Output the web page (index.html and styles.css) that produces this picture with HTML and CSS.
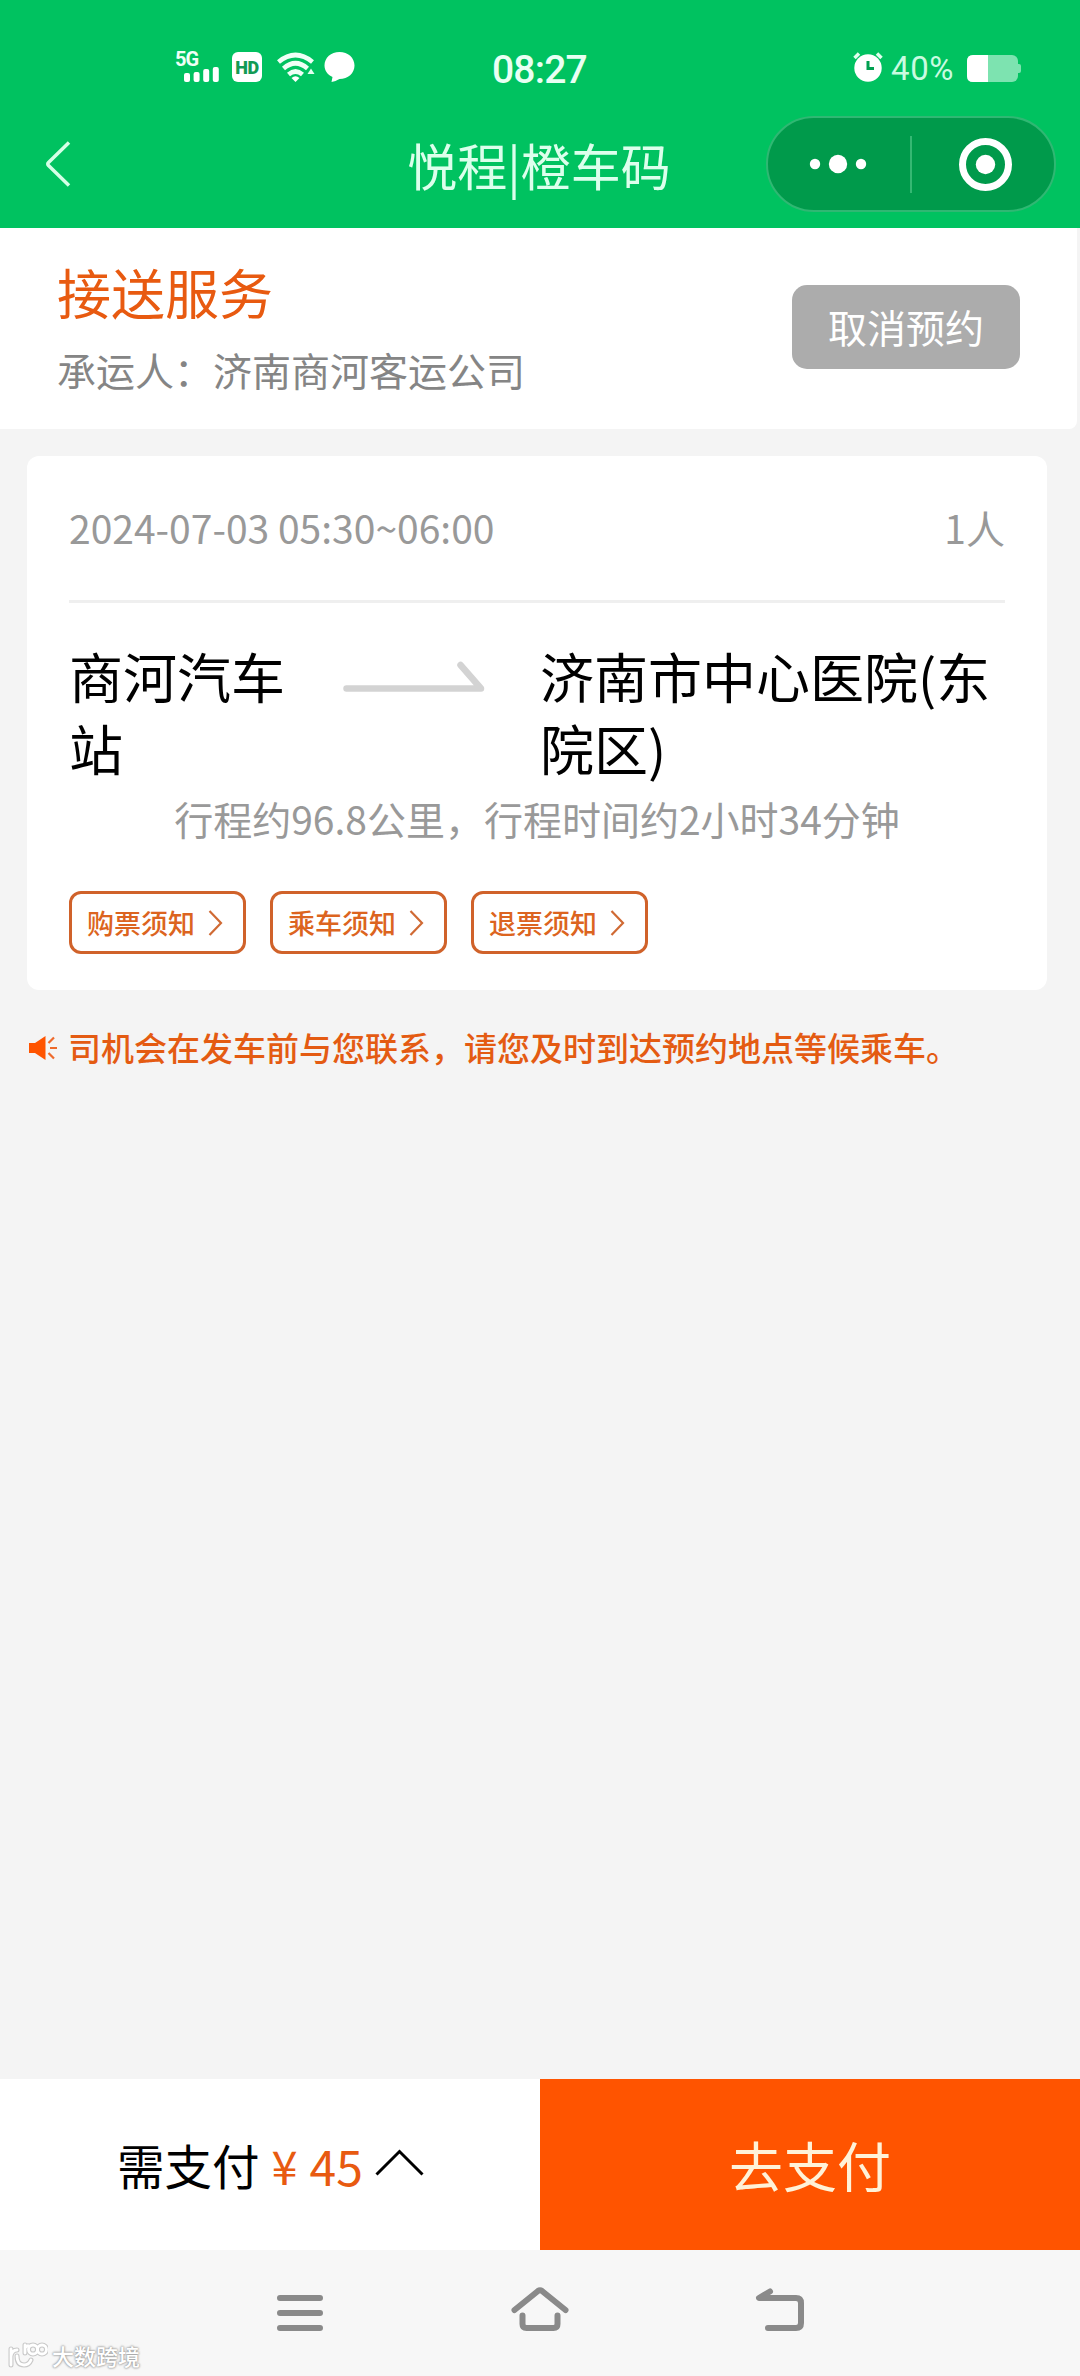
FILE: index.html
```html
<!DOCTYPE html>
<html lang="zh-CN">
<head>
<meta charset="utf-8">
<title>悦程|橙车码</title>
<link rel="stylesheet" href="styles.css">
</head>
<body>
<div class="screen">
  <header class="header">
    <div class="status">
      <div class="status-left">
        <div class="signal">
          <span class="signal-label">5G</span>
          <svg class="signal-bars" width="35" height="15" viewBox="0 0 35 15" fill="#fff"><rect y="6" width="6" height="9" rx="2"/><rect x="9.6" y="5" width="6" height="10" rx="2"/><rect x="19.2" y="2" width="6" height="13" rx="2"/><rect x="28.8" y="0" width="6" height="15" rx="2"/></svg>
        </div>
        <span class="hd">HD</span>
        <svg class="wifi" width="38" height="30" viewBox="0 0 38 30" fill="none" stroke="#effff6" stroke-width="4.6"><path d="M1.500 10Q18.500-4 35.500 10"/><path d="M6.500 16.500Q18.500 6 30.500 16.500"/><path d="M11.500 22.500Q18.500 16.500 25.500 22.500"/><path d="M14.500 26Q18.500 22.500 22.500 26L18.500 30Z" fill="#fff" stroke="none"/><path d="M30.500 22L34 16.500L37.500 22Z" fill="#e0ffef" stroke="none"/></svg>
        <svg class="bubble" width="31" height="30" viewBox="0 0 31 30" fill="#fff"><path d="M15.500 0C24 0 30.500 5.800 30.500 13.500S24 27 15.500 27C12.500 28.500 10.500 29.500 7.500 30L8.500 25C3.500 22.700 .5 18.600 .5 13.500C.5 5.800 7 0 15.500 0Z"/></svg>
      </div>
      <span class="clock">08:27</span>
      <div class="status-right">
        <svg width="30" height="30" viewBox="0 0 30 30"><circle cx="15" cy="16" r="13.700" fill="#fff"/><path d="M1.500 6L6 1.500M28.500 6L24 1.500" stroke="#e0ffee" stroke-width="3.500"/><path d="M15 9V16.500H21" fill="none" stroke="#00a050" stroke-width="3"/></svg>
        <span class="percent">40%</span>
        <svg class="battery" width="55" height="27" viewBox="0 0 55 27"><rect width="51" height="27" rx="6" fill="#7de3b0"/><path d="M51 9H52Q54 9 54 11V16Q54 18 52 18H51Z" fill="#7de3b0"/><path d="M6 0H21V27H6Q0 27 0 21V6Q0 0 6 0Z" fill="#fff"/></svg>
      </div>
    </div>
    <div class="navbar">
      <svg class="back" width="26" height="48" viewBox="0 0 26 48" fill="none" stroke="#d5ffe7" stroke-width="3.500"><path d="M24 2.500L3.500 22.500Q2 24 3.500 25.500L24 45.500"/></svg>
      <h1 class="title">悦程|橙车码</h1>
      <div class="capsule">
        <svg width="285" height="92" viewBox="0 0 285 92"><g fill="#fff"><circle cx="47" cy="46" r="5.200"/><circle cx="70" cy="46" r="9.200"/><circle cx="93" cy="46" r="5.200"/><circle cx="217.500" cy="46.500" r="9.700"/></g><path d="M143 18V75" stroke="#35b873" stroke-width="2"/><circle cx="217.500" cy="46.500" r="23" fill="none" stroke="#fff" stroke-width="7"/></svg>
      </div>
    </div>
  </header>

  <section class="service">
    <div>
      <h2 class="service-name">接送服务</h2>
      <p class="carrier">承运人：济南商河客运公司</p>
    </div>
    <button class="cancel">取消预约</button>
  </section>

  <main class="content">
    <section class="card">
      <div class="trip-head"><span>2024-07-03 05:30~06:00</span><span>1人</span></div>
      <div class="route">
        <div class="from">商河汽车站</div>
        <svg class="arrow" width="142" height="34" viewBox="0 0 142 34" fill="none" stroke="#d3d3d3" stroke-width="6.500" stroke-linecap="round" stroke-linejoin="round"><path d="M3.500 27.500H138L117.500 4"/></svg>
        <div class="to">济南市中心医院(东院区)</div>
      </div>
      <p class="distance">行程约96.8公里，行程时间约2小时34分钟</p>
      <div class="tags">
        <a class="tag">购票须知<svg width="15" height="28" viewBox="0 0 15 28"><path d="M1.500 2L13 14L1.500 26"/></svg></a>
        <a class="tag">乘车须知<svg width="15" height="28" viewBox="0 0 15 28"><path d="M1.500 2L13 14L1.500 26"/></svg></a>
        <a class="tag">退票须知<svg width="15" height="28" viewBox="0 0 15 28"><path d="M1.500 2L13 14L1.500 26"/></svg></a>
      </div>
    </section>
    <p class="notice"><svg width="29" height="26" viewBox="0 0 29 26"><path d="M0 8H6L16.500 1V25L6 18H0Z" fill="#ff5400"/><path d="M19.500 8L25 2.500M21 13H28M19.500 18L25 23.500" stroke="#ee6a2c" stroke-width="2.200"/></svg><span>司机会在发车前与您联系，请您及时到达预约地点等候乘车。</span></p>
  </main>

  <div class="paybar">
    <div class="due"><span>需支付</span><span class="yen">¥</span><span class="amount">45</span><svg width="49" height="27" viewBox="0 0 49 27" fill="none" stroke="#000" stroke-width="3"><path d="M1.500 25.500L24.500 2.500L47.500 25.500"/></svg></div>
    <button class="pay">去支付</button>
  </div>

  <footer class="sysnav">
    <svg class="sys-icon" width="60" height="48" viewBox="0 0 60 48"><path d="M10 12H50M10 27H50M10 42H50"/></svg>
    <svg class="sys-icon" width="60" height="48" viewBox="0 0 60 48"><path d="M4.500 24L28 5Q30 3.500 32 5L55.500 24M12.500 29.500V38Q12.500 42 16.500 42H43.500Q47.500 42 47.500 38V29.500"/></svg>
    <svg class="sys-icon" width="60" height="48" viewBox="0 0 60 48"><path d="M20 5.500L9 12H46Q51 12 51 17V37Q51 42 46 42H18"/></svg>
    <div class="watermark">
      <svg width="40" height="27" viewBox="0 0 40 27" fill="none" stroke-linecap="round"><g stroke="#c9c9c9" stroke-width="5"><path d="M3 7V23M3 14Q4 8 9 8M9 14Q9 23 16 23Q21 23 23 18"/><path d="M17 3V11M17 6Q19 3 21 4"/><circle cx="25" cy="7.500" r="4.500"/><circle cx="34" cy="7.500" r="4.500"/></g><g stroke="#fff" stroke-width="2.800"><path d="M3 7V23M3 14Q4 8 9 8M9 14Q9 23 16 23Q21 23 23 18"/><path d="M17 3V11M17 6Q19 3 21 4"/><circle cx="25" cy="7.500" r="4.500"/><circle cx="34" cy="7.500" r="4.500"/></g></svg>
      <span>大数跨境</span>
    </div>
  </footer>
</div>
</body>
</html>
```
FILE: styles.css
```css
* { box-sizing: border-box; margin: 0; padding: 0; }

body {
  width: 1080px;
  background: #f4f4f4;
  font-family: "Noto Sans CJK SC", sans-serif;
  color: #000;
}

svg { display: block; flex: none; }
button { border: 0; font: inherit; }
h1, h2 { font-weight: 400; }

.screen { display: flex; flex-direction: column; height: 2376px; }

/* green header */
.header { height: 228px; background: #00c260; }

.status {
  display: grid;
  grid-template-columns: 492px 95px 1fr;
  height: 115px;
  padding-top: 52px;
}
.status-left { display: flex; align-items: flex-start; padding-left: 175px; }
.signal { width: 57px; height: 30px; }
.signal-label {
  display: block;
  height: 15px;
  font: 700 20px/15px Roboto, sans-serif;
  letter-spacing: -1px;
  color: #effff6;
}
.signal-bars { margin-left: 9px; }
.hd {
  width: 30px;
  height: 30px;
  margin-right: 15px;
  border-radius: 6px;
  background: #fff;
  color: #139a55;
  font: 900 18px/31px Roboto, sans-serif;
  letter-spacing: -.5px;
  text-align: center;
}
.wifi { margin-right: 9px; }
.clock {
  font: 500 39px/36px Roboto, sans-serif;
  letter-spacing: -.8px;
  color: #e9fff3;
}
.status-right { display: flex; align-items: flex-start; padding-left: 266px; }
.percent {
  width: 74px;
  padding-left: 8px;
  font: 400 33px/34px Roboto, sans-serif;
  letter-spacing: .6px;
  color: #c9fbe0;
}
.battery { margin: 3px 0 0 10px; }

.navbar {
  display: grid;
  grid-template-columns: 361px 1fr 361px;
  align-items: center;
  height: 97px;
  padding-right: 24px;
}
.back { margin-left: 45px; }
.title {
  padding-left: 22px;
  text-align: center;
  font-size: 50px;
  line-height: 92px;
  color: #dcffec;
  white-space: nowrap;
}
.capsule {
  justify-self: end;
  width: 290px;
  height: 96px;
  border: 2px solid #2fb873;
  border-radius: 48px;
  background: #009a4b;
}

/* service summary */
.service {
  display: flex;
  justify-content: space-between;
  width: 1077px;
  height: 201px;
  padding: 26px 57px 0;
  border-radius: 0 0 8px 0;
  background: #fff;
}
.service-name { font-size: 54px; line-height: 76px; color: #e85a10; }
.carrier { font-size: 39px; line-height: 78px; color: #858585; }
.cancel {
  width: 228px;
  height: 84px;
  margin-top: 31px;
  padding-bottom: 2px;
  border-radius: 15px;
  background: #acacac;
  color: #fff;
  font-size: 39px;
  line-height: 80px;
}

/* trip card */
.content { flex: 1; padding: 27px 33px 0 27px; }
.card {
  height: 534px;
  padding: 0 42px;
  border-radius: 12px;
  background: #fff;
}
.trip-head {
  display: flex;
  justify-content: space-between;
  height: 147px;
  border-bottom: 3px solid #efefef;
  font-size: 39px;
  line-height: 143px;
  color: #999;
}
.route {
  display: flex;
  padding-top: 37px;
  font-size: 54px;
  line-height: 72px;
}
.from { width: 220px; }
.arrow { margin: 21px 55px 0 54px; }
.to { flex: 1; margin-right: -12px; }
.distance {
  text-align: center;
  font-size: 39px;
  line-height: 68px;
  color: #999;
}
.tags { display: flex; gap: 24px; margin-top: 39px; }
.tag {
  display: flex;
  align-items: center;
  gap: 13px;
  width: 177px;
  height: 63px;
  padding-left: 15px;
  border: 3px solid #d0622a;
  border-radius: 12px;
  font-size: 27px;
  font-weight: 500;
  line-height: 54px;
  color: #dc6420;
}
.tag svg { fill: none; stroke: #d06a34; stroke-width: 2.2; }

.notice {
  display: flex;
  align-items: center;
  gap: 10px;
  margin: 33px 0 0 2px;
  font-size: 33px;
  font-weight: 500;
  line-height: 48px;
  color: #e45b12;
  white-space: nowrap;
}
.notice svg { margin-top: 2px; }

/* payment bar */
.paybar { display: grid; grid-template-columns: 1fr 1fr; height: 171px; }
.due {
  display: flex;
  align-items: center;
  padding: 0 0 0 117px;
  background: #fff;
  font-size: 47.5px;
}
.yen { width: 38px; margin-left: 12px; font-size: 47px; color: #e85a10; }
.amount { width: 65px; color: #e85a10; font-size: 48px; }
.due svg { margin-bottom: 4px; }
.pay {
  background: #ff5400;
  color: #fff2d8;
  font-size: 54px;
}

/* system navigation */
.sysnav {
  position: relative;
  display: flex;
  gap: 180px;
  height: 126px;
  padding: 36px 0 0 270px;
  background: #f7f7f7;
}
.sys-icon {
  fill: none;
  stroke: #8a8a8a;
  stroke-width: 6;
  stroke-linecap: round;
  stroke-linejoin: round;
}
.watermark {
  position: absolute;
  left: 8px;
  bottom: 6px;
  display: flex;
  align-items: center;
  gap: 4px;
  font-size: 22px;
  font-weight: 500;
  line-height: 30px;
  color: #fff;
  text-shadow: 0 0 2px #999, 0 0 2px #aaa, 0 0 3px #bbb;
}
```
